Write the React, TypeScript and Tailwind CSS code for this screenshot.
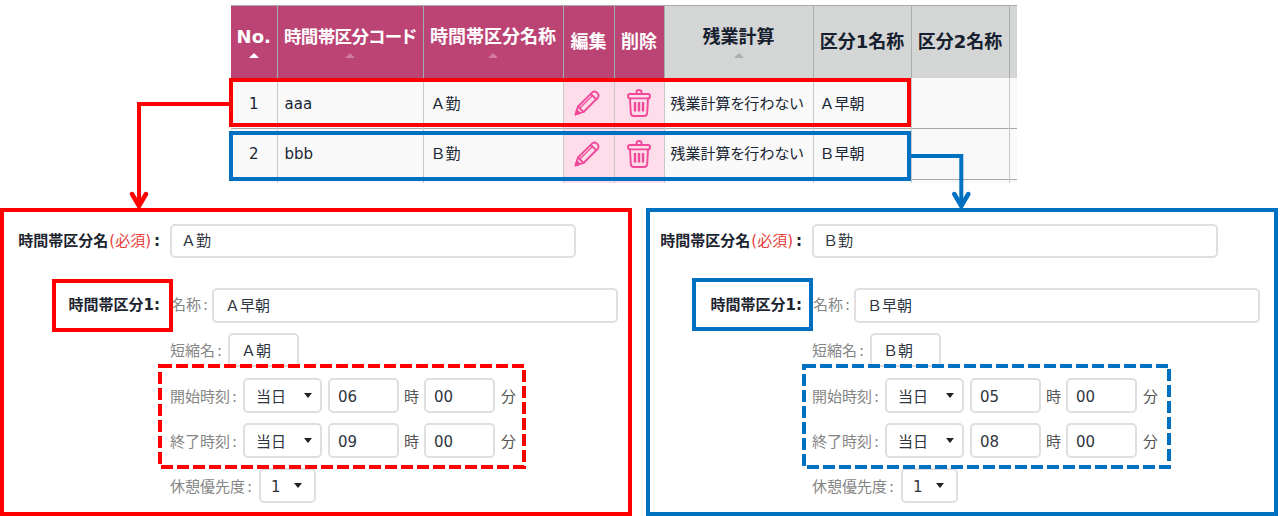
const Pencil = () => (
  <svg width="26" height="26" viewBox="0 0 26 26" fill="none" stroke="#f2489a" strokeWidth="1.8" strokeLinejoin="round" strokeLinecap="round" className="block">
    <path d="M1.5 24.5 L4 16.5 L18.5 2.2 Q20.5 0.6 23 2.6 Q25.6 5 24 7.5 L9.5 22 Z" />
    <path d="M16.8 4 L22.3 9.3" />
    <path d="M6.5 17.5 L18.5 5.5" strokeWidth="1.2" />
    <path d="M1.5 24.5 L2.8 20.2 L5.8 23.2 Z" fill="#f2489a" />
    <path d="M4 16.5 L9.5 22" />
  </svg>
);

const Trash = () => (
  <svg width="24" height="28" viewBox="0 0 24 28" fill="none" stroke="#f2489a" strokeWidth="1.9" strokeLinejoin="round" strokeLinecap="round" className="block">
    <path d="M9.5 5 V3.2 Q9.5 1 12 1 Q14.5 1 14.5 3.2 V5" />
    <rect x="1" y="5" width="22" height="4.4" rx="2" />
    <path d="M3 9.4 L3.8 24 Q4 27 7 27 H17 Q20 27 20.2 24 L21 9.4" />
    <path d="M8 13 V22.5 M12 13 V22.5 M16 13 V22.5" strokeWidth="2.4" strokeLinecap="butt" />
  </svg>
);

const Arrow = ({ on }: { on?: boolean }) => (
  <div className={`mx-auto mt-[5px] h-0 w-0 border-x-[5px] border-b-[5px] border-x-transparent ${on ? "border-b-white" : "border-b-white/30"}`} />
);
const GrayArrow = () => (
  <div className="mx-auto mt-[5px] h-0 w-0 border-x-[5px] border-b-[5px] border-x-transparent border-b-[#a9acb0]" />
);

const thPink = "border-r border-[#9fb0a8] bg-[#bc4474] text-white text-center font-bold text-[18px] leading-[22px] align-middle p-0";
const thGray = "border-r border-[#aaadad] bg-[#d4d6d6] text-[#16202e] text-center font-bold text-[18px] leading-[22px] align-middle p-0";
const td = "border-r border-[#c8c8c8] bg-[#f9f9f9] text-[15px] text-[#1a2533] px-[7px] align-middle";
const tdIcon = "border-r border-[#c8c8c8] bg-[#fcdde9] align-middle";

const Row = ({ n, code, name, first, calc, icons, pt }: { n: string; code: string; name: string; first: string; calc: string; icons?: boolean; pt: string }) => (
  <tr className="h-[51px] border-b border-[#a8a8a8]">
    <td className={`${td} ${pt} text-center`}>{n}</td>
    <td className={`${td} ${pt}`}>{code}</td>
    <td className={`${td} ${pt} pl-[7px]`}>{name}</td>
    <td className={tdIcon}>{icons && <div className="flex justify-center pr-[3px]"><Pencil /></div>}</td>
    <td className={tdIcon}>{icons && <div className="flex justify-center"><Trash /></div>}</td>
    <td className={`${td} ${pt} whitespace-nowrap pl-[6px] text-[15.8px] [font-feature-settings:'palt']`}>{calc}</td>
    <td className={`${td} ${pt} pl-[6px]`}>{first}</td>
    <td className={td}></td>
    <td className={td}></td>
  </tr>
);

const box = "flex items-center rounded-[5px] border-2 border-[#dfdfdf] bg-white text-[15px] text-[#2f3540]";

const Caret = () => (
  <div className="-mt-[3px] h-0 w-0 border-x-[4px] border-t-[5px] border-x-transparent border-t-[#222]" />
);

const Sel = ({ v, w, pl, gap }: { v: string; w: string; pl: string; gap: string }) => (
  <div className={`${box} pt-[3px] h-[35px] ${w} ${pl} ${gap} justify-between`}>
    <span>{v}</span>
    <Caret />
  </div>
);

const Lbl = ({ t, cl }: { t: string; cl: string }) => (
  <span className={`text-[15px] text-[#858585] whitespace-nowrap ${cl}`}>
    {t}
    <span className="ml-[2px]">:</span>
  </span>
);

const TimeRow = ({ label, h, m, cl }: { label: string; h: string; m: string; cl: string }) => (
  <div className={`flex items-center h-[35px] pl-[166px] ${cl}`}>
    <Lbl t={label} cl="w-[73px] pt-[3px]" />
    <Sel v="当日" w="w-[79px]" pl="pl-[11px]" gap="pr-[8px]" />
    <div className={`${box} pt-[3px] ml-[6px] h-[35px] w-[71px] pl-[8px]`}>{h}</div>
    <span className="ml-[5px] w-[15px] pt-[3px] text-[15px] text-[#555]">時</span>
    <div className={`${box} pt-[3px] ml-[5px] h-[35px] w-[71px] pl-[8px]`}>{m}</div>
    <span className="ml-[6px] pt-[3px] text-[15px] text-[#555]">分</span>
  </div>
);

const Panel = ({ blue, name, first, short, h1, h2 }: { blue?: boolean; name: string; first: string; short: string; h1: string; h2: string }) => {
  const color = blue ? "#0070c0" : "#ff0000";
  return (
    <div className={`relative h-[308px] w-[632px] shrink-0 overflow-hidden border-4 ${blue ? "border-[#0070c0]" : "border-[#ff0000]"}`}>
      <div className={`relative pt-[12px] ${blue ? "-ml-1" : ""}`}>
        <div className="flex items-center h-[34px]">
          <div className="w-[156px] text-right text-[15px] font-bold text-[#1c2430] whitespace-nowrap">
            時間帯区分名<span className="ml-[1px] font-normal text-[#e8413c]">(必須)</span><span className="ml-[3px]">:</span>
          </div>
          <div className={`${box} pt-[1px] ml-[10px] h-[34px] w-[406px] pl-[9px]`}>{name}</div>
        </div>
        <div className="flex items-center h-[35px] mt-[30px]">
          <div className="w-[156px] text-right text-[15px] font-bold text-[#1c2430] whitespace-nowrap">時間帯区分1:</div>
          <Lbl t="名称" cl="ml-[11px] w-[41px]" />
          <div className={`${box} pt-[1px] h-[35px] w-[406px] pl-[11px]`}>{first}</div>
        </div>
        <div className="flex items-center h-[34px] mt-[10px] pl-[166px]">
          <Lbl t="短縮名" cl="w-[58px] pt-[3px]" />
          <div className={`${box} pt-[3px] h-[34px] w-[71px] pl-[11px]`}>{short}</div>
        </div>
        <TimeRow label="開始時刻" h={h1} m="00" cl="mt-[11px]" />
        <TimeRow label="終了時刻" h={h2} m="00" cl="mt-[10px]" />
        <div className="flex items-center h-[35px] mt-[10px] pl-[166px]">
          <Lbl t="休憩優先度" cl="w-[89px] pt-[3px]" />
          <Sel v="1" w="w-[57px]" pl="pl-[10px]" gap="pr-[12px]" />
        </div>

        <div className={`absolute h-[53px] w-[121px] border-4 ${blue ? "left-[46px] top-[66px] border-[#0070c0]" : "left-[48px] top-[67px] border-[#ff0000]"}`} />
        <svg className={`absolute top-[152px] ${blue ? "left-[156px]" : "left-[154px]"}`} width={blue ? 369 : 368} height="105" fill="none">
          <rect x="2" y="2" width={blue ? 365 : 364} height="101" stroke={color} strokeWidth="4" strokeDasharray="12 4" />
        </svg>
      </div>
    </div>
  );
};

export default function App() {
  return (
    <div className="relative h-[516px] w-[1282px] overflow-hidden bg-white font-['DejaVu_Sans','Noto_Sans_CJK_JP',sans-serif]">
      <div className="ml-[231px] pt-[5px] h-[183px] w-[786px] overflow-hidden">
        <table className="w-[786px] table-fixed border-collapse border-t border-[#a8a8a8]">
          <colgroup>
            <col className="w-[46px]" />
            <col className="w-[146px]" />
            <col className="w-[140px]" />
            <col className="w-[51px]" />
            <col className="w-[50px]" />
            <col className="w-[149px]" />
            <col className="w-[98px]" />
            <col className="w-[98px]" />
            <col className="w-[8px]" />
          </colgroup>
          <thead>
            <tr className="h-[72px]">
              <th className={thPink}>No.<Arrow on /></th>
              <th className={`${thPink} whitespace-nowrap`}>
                <span className="text-[17.5px] tracking-[-0.6px] [font-feature-settings:'palt']">時間帯区分コード</span>
                <Arrow />
              </th>
              <th className={`${thPink} whitespace-nowrap`}>時間帯区分名称<Arrow /></th>
              <th className={thPink}>編集</th>
              <th className={thPink}>削除</th>
              <th className={thGray}>残業計算<GrayArrow /></th>
              <th className={`${thGray} whitespace-nowrap`}>区分1名称</th>
              <th className={`${thGray} whitespace-nowrap`}>区分2名称</th>
              <th className={thGray}></th>
            </tr>
          </thead>
          <tbody>
            <Row n="1" code="aaa" name="Ａ勤" first="Ａ早朝" calc="残業計算を行わない" icons pt="pt-[2px]" />
            <Row n="2" code="bbb" name="Ｂ勤" first="Ｂ早朝" calc="残業計算を行わない" icons pt="pt-0" />
            <Row n="" code="" name="" first="" calc="" pt="pt-0" />
          </tbody>
        </table>
      </div>

      <div className="mt-[25px] flex gap-[14px]">
        <Panel name="Ａ勤" first="Ａ早朝" short="Ａ朝" h1="06" h2="09" />
        <Panel blue name="Ｂ勤" first="Ｂ早朝" short="Ｂ朝" h1="05" h2="08" />
      </div>

      <div className="absolute left-[229px] top-[78px] h-[49px] w-[682px] border-4 border-[#ff0000]" />
      <div className="absolute left-[229px] top-[131px] h-[50px] w-[682px] border-4 border-[#0070c0]" />
      <svg className="absolute left-0 top-0" width="1282" height="516" fill="none" strokeWidth="4">
        <path d="M229 104 H139 V207" stroke="#ff0000" />
        <path d="M132 194 L139 206 L146 194" stroke="#ff0000" strokeWidth="4.5" strokeLinecap="round" />
        <path d="M911 156 H961.3 V207" stroke="#0070c0" />
        <path d="M954.3 194 L961.3 206 L968.3 194" stroke="#0070c0" strokeWidth="4.5" strokeLinecap="round" />
      </svg>
    </div>
  );
}
